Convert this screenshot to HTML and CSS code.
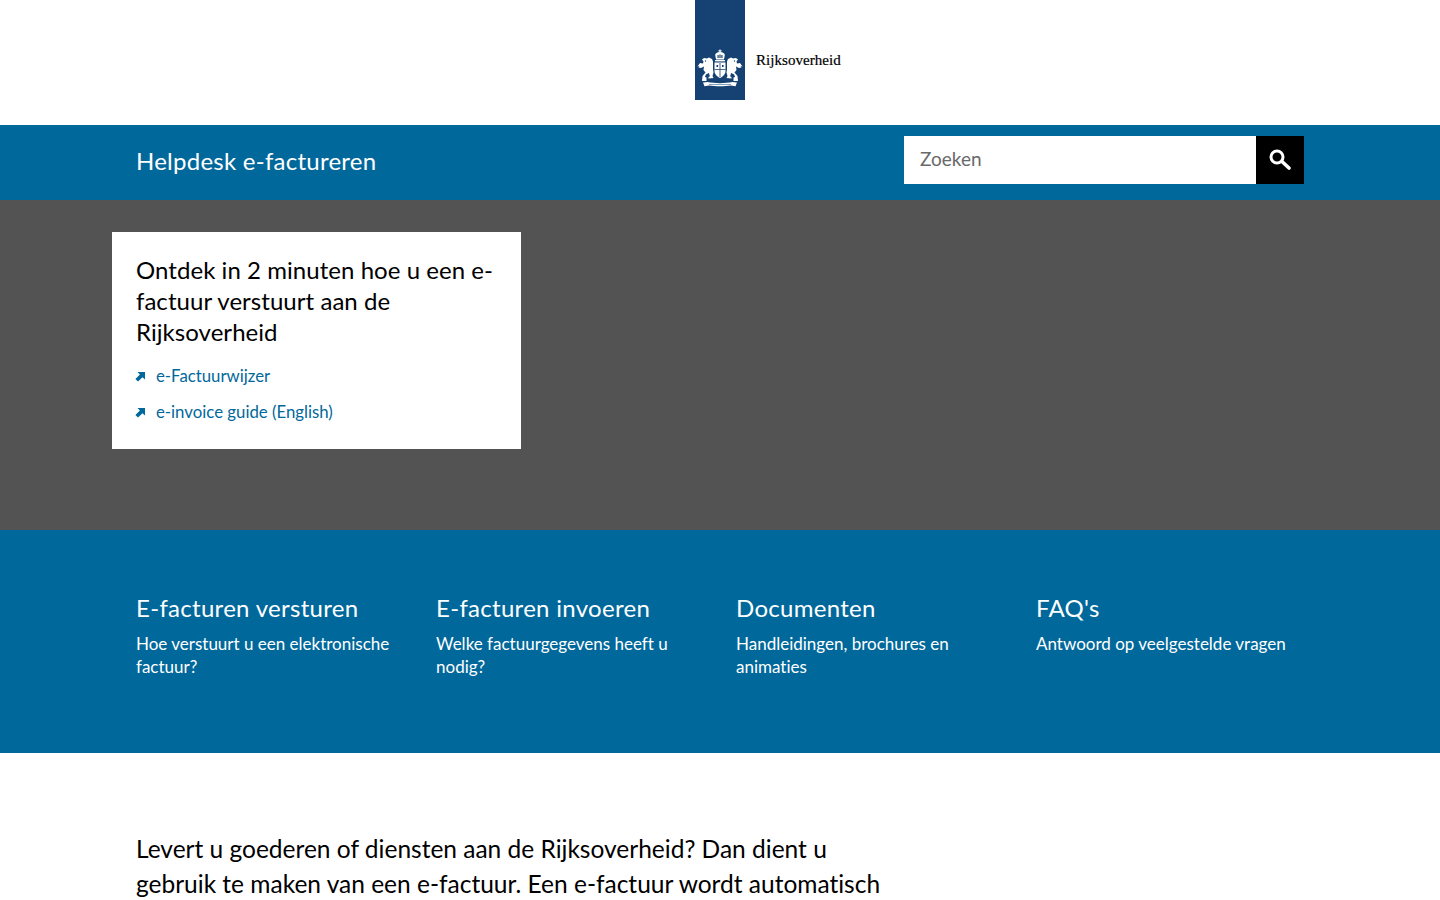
FILE: index.html
```html
<!DOCTYPE html>
<html lang="nl">
<head>
<meta charset="utf-8">
<title>Helpdesk e-factureren</title>
<link rel="stylesheet" href="styles.css">
</head>
<body>
<header class="top">
  <a class="logo" href="#">
    <span class="logo-bar">
      <svg class="emblem" viewBox="0 0 50 45" width="50" height="45" aria-hidden="true">
        <g fill="#fff">
          <rect x="24.400" y="4.600" width="1.200" height="3"/>
          <rect x="23.400" y="5.400" width="3.200" height="1"/>
          <path d="M25 7c3 0 4.600 1.400 4.800 3l-.8 4.500h-8l-.8-4.500C20.400 8.400 22 7 25 7z"/>
          <rect x="20" y="15" width="10" height="1.400"/>
          <path d="M19.500 17.500h11v8.500c0 3.500-2.700 5.500-5.500 7-2.800-1.500-5.500-3.500-5.500-7z"/>
          <path d="M7 14.500l2-1.500 3 .5 2-1 3 1.500 1 2.500v8l.5 3-1 3.500 1 2-5 .5v-1.500l1.400-.5-1-3.500-3 1.500-1 2.500 1.600.6V36H7l.5-5 3-3.500L8.500 25l.5-3.500L6 23l-2.500-.5 1-1.500-2 .5 2.500-3.500 3 .5.500-2z"/>
          <path d="M43 14.500l-2-1.500-3 .5-2-1-3 1.500-1 2.500v8l-.5 3 1 3.500-1 2 5 .5v-1.500l-1.400-.5 1-3.500 3 1.500 1 2.500-1.600.6V36H43l-.5-5-3-3.500 2-2.500-.5-3.500 3 1.500 2.500-.5-1-1.500 2 .5-2.500-3.500-3 .5-.5-2z"/>
          <path d="M8 37.500l4.500-.5c7 1.500 18 1.500 25 0l4.500.5-1.500 3.800-4.500-.8c-6 1-16 1-22 0l-4.500.8z"/>
        </g>
        <g fill="#154273">
          <path d="M22.500 10h1.200v3h-1.200zM26.300 10h1.200v3h-1.200zM24.400 9.500h1.200v3.500h-1.200z"/>
          <path d="M24.600 18h.8v14h-.8zM19.500 24h11v.8h-11z"/>
          <path d="M21.500 20h1.600v2h-1.600zM27 20h1.600v2h-1.600z"/>
          <path d="M14 39h22v.5H14z"/>
          <circle cx="10.500" cy="16" r=".7"/>
          <circle cx="39.500" cy="16" r=".7"/>
        </g>
      </svg>
    </span>
    <span class="logo-text">Rijksoverheid</span>
  </a>
</header>

<div class="bar">
  <div class="wrap bar-inner">
    <a class="site-name" href="#">Helpdesk e-factureren</a>
    <form class="search">
      <input class="search-input" type="text" placeholder="Zoeken">
      <button class="search-btn" type="button" aria-label="Zoeken">
        <svg viewBox="0 0 22 22" width="22" height="22" aria-hidden="true">
          <circle cx="8" cy="8" r="6" fill="none" stroke="#fff" stroke-width="3"/>
          <path d="M13.500 13l6.500 6" fill="none" stroke="#fff" stroke-width="3.600" stroke-linecap="round"/>
        </svg>
      </button>
    </form>
  </div>
</div>

<section class="hero">
  <div class="hero-inner">
    <div class="card">
      <h2 class="card-title">Ontdek in 2 minuten hoe u een e-factuur verstuurt aan de Rijksoverheid</h2>
      <ul class="card-links">
        <li class="card-item">
          <svg class="arrow" viewBox="0 0 10 10" width="10" height="10" aria-hidden="true"><path d="M2.500 0H10V7.500L7.500 5.200 3 9.600 .4 7 4.900 2.500z" fill="#01689b"/></svg>
          <a href="#">e-Factuurwijzer</a>
        </li>
        <li class="card-item">
          <svg class="arrow" viewBox="0 0 10 10" width="10" height="10" aria-hidden="true"><path d="M2.500 0H10V7.500L7.500 5.200 3 9.600 .4 7 4.900 2.500z" fill="#01689b"/></svg>
          <a href="#">e-invoice guide (English)</a>
        </li>
      </ul>
    </div>
  </div>
</section>

<nav class="tiles">
  <div class="wrap tiles-grid">
    <a class="tile" href="#">
      <h2 class="tile-title">E-facturen versturen</h2>
      <p class="tile-text">Hoe verstuurt u een elektronische factuur?</p>
    </a>
    <a class="tile" href="#">
      <h2 class="tile-title">E-facturen invoeren</h2>
      <p class="tile-text">Welke factuurgegevens heeft u nodig?</p>
    </a>
    <a class="tile" href="#">
      <h2 class="tile-title">Documenten</h2>
      <p class="tile-text">Handleidingen, brochures en animaties</p>
    </a>
    <a class="tile" href="#">
      <h2 class="tile-title">FAQ's</h2>
      <p class="tile-text">Antwoord op veelgestelde vragen</p>
    </a>
  </div>
</nav>

<main class="wrap intro">
  <p class="lead">Levert u goederen of diensten aan de Rijksoverheid? Dan dient u gebruik te maken van een e-factuur. Een e-factuur wordt automatisch verwerkt in het systeem van de ontvanger.</p>
</main>
</body>
</html>
```
FILE: styles.css
```css
* { box-sizing: border-box; }
html, body { margin: 0; padding: 0; }
body {
  font-family: "Lato", "Noto Sans", sans-serif;
  font-variant-ligatures: none;
  color: #000;
  background: #fff;
  height: 900px;
  overflow: hidden;
}
a { text-decoration: none; color: inherit; }
h2, p, ul { margin: 0; padding: 0; }

.wrap { width: 1168px; margin: 0 auto; }

.top { height: 125px; display: flex; justify-content: center; }
.logo { display: flex; align-items: flex-start; margin-left: 97px; width: 147px; }
.logo-bar {
  width: 50px; height: 100px; background: #154273;
  display: flex; align-items: flex-end; flex: none;
  padding-bottom: 10px;
}
.emblem { display: block; }
.logo-text {
  font-family: "Liberation Serif", serif;
  font-size: 15px;
  line-height: 18px;
  letter-spacing: 0.05px;
  -webkit-text-stroke: 0.2px #000;
  margin: 51px 0 0 11px;
  color: #000;
}

.bar { height: 75px; background: #01689b; }
.bar-inner { height: 75px; display: flex; align-items: flex-start; justify-content: space-between; }
.site-name { color: #fff; font-size: 24px; line-height: 30px; margin-top: 21px; letter-spacing: 0.25px; }
.search { display: flex; margin-top: 11px; }
.search-input {
  width: 352px; height: 48px; border: 0; padding: 0 16px 3px;
  font: 19px/45px "Lato", sans-serif; background: #fff; color: #000; outline: 0;
}
.search-input::placeholder { color: #696969; opacity: 1; }
.search-btn {
  width: 48px; height: 48px; border: 0; padding: 0; background: #000;
  display: flex; align-items: center; justify-content: center;
}

.hero { height: 330px; background: #535353; padding-top: 32px; }
.hero-inner { width: 1216px; margin: 0 auto; }
.card { width: 409px; height: 217px; background: #fff; padding: 22px 24px 0; }
.card-title { font-size: 24px; line-height: 31px; font-weight: 400; letter-spacing: 0.05px; }
.card-links { list-style: none; margin-top: 10px; }
.card-item {
  display: flex; align-items: center; height: 36px;
  font-size: 16.800px; color: #01689b;
}
.arrow { flex: none; margin: 3px 11px 0 -1px; }

.tiles { height: 223px; background: #01689b; color: #fff; padding-top: 62px; }
.tiles-grid { display: grid; grid-template-columns: repeat(4, 300px); width: 1168px; }
.tile { display: block; padding-right: 32px; }
.tile-title { font-size: 24px; line-height: 32px; font-weight: 400; letter-spacing: 0.3px; }
.tile-text { font-size: 17px; line-height: 23px; margin-top: 8px; }

.intro { padding-top: 78px; }
.lead { width: 770px; font-size: 24.500px; line-height: 35px; }
```
